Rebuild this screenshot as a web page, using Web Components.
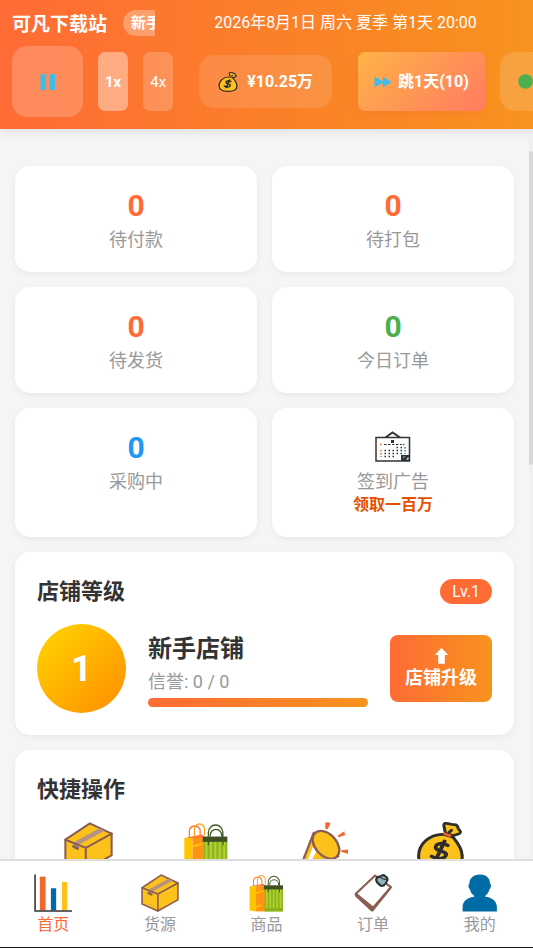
<!DOCTYPE html>
<html lang="zh-CN">
<head>
<meta charset="utf-8">
<meta name="viewport" content="width=device-width, initial-scale=1">
<title>可凡下载站</title>
<style>
  :root {
    --primary: #ff6b35;
    --accent: #f7931e;
    --muted: #999;
    --ink: #333;
  }
  html, body { height: 100%; }
  body {
    margin: 0;
    overflow: hidden;
    background: #f5f5f5;
    color: var(--ink);
    font-family: Roboto, "Noto Sans CJK SC", sans-serif;
  }
</style>
</head>
<body>
<shop-app></shop-app>

<script>
const ICONS = {
  box: `
    <g stroke="#8a5d50" stroke-width="3" stroke-linejoin="round" stroke-linecap="round">
      <path fill="#fcc21b" d="M38 2 70 17V49L32 70 2 57V26Z"/>
      <path fill="#b99182" stroke="none" d="M14 30 52 9l8 4-38 20v6l-8-4Z"/>
      <path fill="none" d="M2 26 32 38 70 17M32 38V70"/>
      <path stroke-width="4" d="M14 36 20 39"/>
      <path stroke="#d9a878" d="M16 57 19 58"/>
    </g>`,
  bags: `
    <g transform="translate(3 2) scale(.93 .97)">
      <path fill="none" stroke="#ff7a2f" stroke-width="2" d="M10 23V10a9 9 0 0 1 17 0V20"/>
      <path fill="none" stroke="#ffa01c" stroke-width="2" d="M18 20V9a8 8 0 0 1 16 0V18"/>
      <path fill="#ff7a2f" d="M2 22 30 17 36 22Z"/>
      <path fill="#ffc400" d="M2 22H15V71L2 69Z"/>
      <path fill="#ff9314" d="M15 22H35V71H15Z"/>
      <path stroke="#ffc400" stroke-width="3" d="M15 35 30 31M15 63 26 58"/>
      <path fill="#8fb61d" d="M33 27H70V71H33Z"/>
      <path stroke="#b2d235" stroke-width="3" d="M37 28V65M44 28V65M51 28V65M58 28V65M65 28V65"/>
      <path fill="#8cb119" d="M33 65H70V71H33Z"/>
      <path fill="#3f4f22" d="M31 20H70V28H31Z"/>
      <path fill="none" stroke="#3f5a25" stroke-width="2" d="M40 33V14a11 11 0 0 1 23 0V33M43 20V18a9 9 0 0 1 18 0v2"/>
    </g>`,
  horn: `
    <g transform="translate(-4 0) scale(1.12)">
      <path fill="#fcc21b" stroke="#8a5d50" stroke-width="3" stroke-linejoin="round" d="M23 14 7 55l6 7 42-17Z"/>
      <path fill="#fff" d="M24 27 12 57l4 1L29 34Z"/>
      <ellipse cx="39" cy="30" rx="21" ry="14" transform="rotate(48 39 30)" fill="#fcc21b" stroke="#8a5d50" stroke-width="3"/>
      <path fill="#f06a30" d="M38 1q4-2 7 1l-4 8-3-1ZM63 12l1 5-8 3-2-2ZM68 36v6l-9-3v-2Z"/>
    </g>`,
  money: `
    <g transform="translate(-5 0) scale(1.12 1.01)" stroke="#2d2d2d" stroke-width="4" stroke-linejoin="round" stroke-linecap="round">
      <path fill="#fcc21b" d="M41 18C22 17 7 33 8 51c1 13 13 18 30 18s28-5 27-20c0-9-6-19-12-27Z"/>
      <path fill="#fcc21b" d="M43 16 41 5q0-4 4-3l9 2q5-1 6 6 5 5 1 7l-8 3Z"/>
      <path fill="none" d="M48 15 51 12"/>
      <path stroke="#e8602c" d="M42 17 49 20"/>
      <path fill="none" stroke-width="5" d="M46 34q-8-5-14-1-5 6 4 9 12 3 6 9-7 5-17-1M42 28 30 56"/>
    </g>`,
  chart: `
    <path fill="#f1672e" d="M11 5H22V69H11Z"/>
    <path fill="#0069a6" d="M32 27H42V69H32Z"/>
    <path fill="#fcc21b" d="M53 15H63V69H53Z"/>
    <path fill="none" stroke="#333" stroke-width="3" d="M2 1V70H72"/>`,
  board: `
    <path fill="#fff" stroke="#8a5d50" stroke-width="4" stroke-linejoin="round" d="M40 3 70 25 35 68 3 38Z"/>
    <path fill="#8a5d50" d="M2 37 5 36 36 61 68 24 71 27 36 71H33L2 42Z"/>
    <path fill="#8fb4bd" stroke="#2d3133" stroke-width="4" stroke-linejoin="round" d="M42 10q3-6 8-5 4-5 9-1 6 3 4 8-1 5-7 10-5 2-9-3-5-3-5-9Z"/>
    <path fill="none" stroke="#2d3133" stroke-width="2" d="M49 6q6 5 13 4"/>`,
  person: `
    <path fill="#006ca5" d="M36 1c13 0 19 8 19 17 3 2 2 9-1 11-2 7-5 10-8 12v2c12 1 22 8 22 20v8H3V63c0-12 10-19 22-20v-2c-4-2-7-6-8-12-3-2-4-9-1-11C16 9 23 1 36 1Z"/>`,
  calendar: `
    <path fill="none" stroke="#333" stroke-width="4" d="M21 15 35 5 50 15"/>
    <path fill="#fff" stroke="#333" stroke-width="3" d="M2 15H69V62H2Z"/>
    <path stroke="#333" stroke-width="6" d="M32 23H38"/>
    <path fill="none" stroke="#333" stroke-width="2" stroke-dasharray="5 3" d="M18 29H54"/>
    <g fill="none" stroke="#333" stroke-width="3" stroke-dasharray="3 5">
      <path d="M43 35H54M19 41H54M19 47H54M19 53H38"/>
    </g>
    <path fill="none" stroke="#f1672e" stroke-width="3" stroke-dasharray="3 3" d="M10 29H16M12 40V54"/>
    <path fill="none" stroke="#1c7fb5" stroke-width="3" stroke-dasharray="3 3" d="M56 29H62M60 34V48"/>
    <path fill="#2d3133" d="M52 50H70V62H52Z"/>
    <path fill="#6ab7dd" d="M56 53h5l-4 4Z"/>
    <path fill="#fff" d="M62 59 67 54v5Z"/>`,
  pause: `<path fill="#3fbde8" d="M21 20H31V52H21ZM40 20H50V52H40Z"/>`,
  forward: `<path fill="#3fbde8" d="M2 14 35 33V14L70 36 35 58V39L2 58Z"/>`,
  up: `<path fill="#fff" d="M36 3 64 34H50V71H22V34H8Z"/>`,
  dot: `<circle cx="36" cy="36" r="35" fill="#4caf50"/>`
};

class AppIcon extends HTMLElement {
  constructor() {
    super();
    this._root = this.attachShadow({mode: 'open'});
  }

  connectedCallback() {
    this._root.innerHTML = `
      <style>
        :host { display: block; flex: none; width: var(--icon-size, 36px); height: var(--icon-size, 36px); }
        svg { display: block; width: 100%; height: 100%; }
      </style>
      <svg viewBox="0 0 72 72" aria-hidden="true">${ICONS[this.getAttribute('name')]}</svg>
    `;
  }
}

class AppHeader extends HTMLElement {
  constructor() {
    super();
    this._root = this.attachShadow({mode: 'open'});
    this._root.innerHTML = `
      <style>
        :host {
          display: flex;
          flex-direction: column;
          flex: none;
          gap: 10px;
          padding: 10px 12px 12px;
          overflow: hidden;
          background: linear-gradient(90deg, var(--primary), var(--accent));
          color: #fff;
        }
        .top, .brand, .tools, .chip, button { display: flex; align-items: center; }
        .top { gap: 15px; }
        .brand { flex: none; width: 143px; overflow: hidden; gap: 16px; white-space: nowrap; }
        h1 { margin: 0; font-size: 19px; line-height: 26px; padding-top: 2px; margin-bottom: -2px; }
        .rank {
          flex: none;
          padding: 0 8px;
          border-radius: 13px;
          background: rgba(255, 255, 255, .3);
          font-size: 15px;
          font-weight: bold;
          line-height: 26px;
        }
        time { flex: 1; text-align: center; font-size: 16px; line-height: 24px; white-space: nowrap; }
        .tools { gap: 15px; }
        button, .chip {
          flex: none;
          box-sizing: border-box;
          justify-content: center;
          border: 0;
          color: inherit;
          font: bold 16px/22px Roboto, "Noto Sans CJK SC", sans-serif;
          white-space: nowrap;
        }
        .pause { width: 71px; height: 71px; border-radius: 15px; background: rgba(255, 255, 255, .2); --icon-size: 36px; }
        .speed { height: 59px; padding: 0 7px; border-radius: 7px; background: rgba(255, 255, 255, .2); font-size: 15px; font-weight: normal; }
        .speed.on { background: rgba(255, 255, 255, .4); font-weight: bold; }
        .chip { height: 53px; margin: 0 11px; padding: 0 19px; gap: 9px; border-radius: 15px; background: rgba(255, 255, 255, .12); --icon-size: 20px; }
        .skip {
          height: 59px;
          padding: 0 16px;
          gap: 6px;
          border-radius: 7px;
          background: linear-gradient(135deg, #ffb347, #ff7b61);
          box-shadow: 0 3px 8px rgba(255, 107, 53, .3);
          --icon-size: 18px;
        }
        .status { height: 59px; padding: 0 18px; border-radius: 15px; background: rgba(255, 255, 255, .15); --icon-size: 15px; }
      </style>
      <div class="top">
        <div class="brand"><h1>可凡下载站</h1><span class="rank">新手</span></div>
        <time datetime="2026-08-01T20:00">2026年8月1日 周六 夏季 第1天 20:00</time>
      </div>
      <div class="tools">
        <button class="pause" aria-label="暂停"><app-icon name="pause"></app-icon></button>
        <button class="speed on">1x</button>
        <button class="speed">4x</button>
        <div class="chip"><app-icon name="money"></app-icon><span>¥10.25万</span></div>
        <button class="skip"><app-icon name="forward"></app-icon><span>跳1天(10)</span></button>
        <button class="status" aria-label="状态"><app-icon name="dot"></app-icon></button>
      </div>
    `;
  }
}

class StatCard extends HTMLElement {
  constructor() {
    super();
    this._root = this.attachShadow({mode: 'open'});
    this._root.innerHTML = `
      <style>
        :host {
          display: flex;
          flex-direction: column;
          align-items: center;
          padding: 22px 22px 21px;
          border-radius: 15px;
          background: #fff;
          box-shadow: 0 2px 6px rgba(0, 0, 0, .05);
          color: var(--muted);
          font-size: 18px;
          line-height: 23px;
        }
        .value {
          display: flex;
          align-items: center;
          height: 35px;
          margin-bottom: 5px;
          color: var(--value-color, var(--primary));
          font-size: 30px;
          font-weight: bold;
        }
        ::slotted([slot="note"]) { color: #e65100; font-size: 16px; }
      </style>
      <div class="value"><slot name="value">0</slot></div>
      <slot></slot>
      <slot name="note"></slot>
    `;
  }
}

class PanelCard extends HTMLElement {
  constructor() {
    super();
    this._root = this.attachShadow({mode: 'open'});
    this._root.innerHTML = `
      <style>
        :host {
          display: block;
          padding: 22px;
          border-radius: 15px;
          background: #fff;
          box-shadow: 0 2px 6px rgba(0, 0, 0, .05);
        }
        header { display: flex; align-items: center; justify-content: space-between; margin-bottom: 15px; }
        h2 { margin: 0; font-size: 22px; line-height: 35px; }
        ::slotted([slot="badge"]) {
          padding: 0 12px;
          border-radius: 13px;
          background: var(--primary);
          color: #fff;
          font-size: 16px;
          line-height: 25px;
        }
      </style>
      <header><h2><slot name="title"></slot></h2><slot name="badge"></slot></header>
      <slot></slot>
    `;
  }
}

class ShopLevel extends HTMLElement {
  constructor() {
    super();
    this._root = this.attachShadow({mode: 'open'});
    this._root.innerHTML = `
      <style>
        :host { display: flex; align-items: center; gap: 22px; }
        .medal {
          flex: none;
          display: flex;
          align-items: center;
          justify-content: center;
          width: 89px;
          height: 89px;
          border-radius: 50%;
          background: linear-gradient(135deg, #ffd700, #ff8c00);
          color: #fff;
          font-size: 36px;
          font-weight: bold;
        }
        .info { flex: 1; min-width: 0; }
        h3 { margin: 0; font-size: 24px; line-height: 38px; }
        p { margin: 0 0 3px; color: var(--muted); font-size: 18px; line-height: 27px; }
        .bar { height: 9px; border-radius: 5px; background: linear-gradient(90deg, var(--primary), var(--accent)); }
        button {
          flex: none;
          display: flex;
          flex-direction: column;
          align-items: center;
          gap: 2px;
          padding: 12px 15px;
          border: 0;
          border-radius: 8px;
          background: linear-gradient(90deg, var(--primary), var(--accent));
          color: #fff;
          font: bold 18px/24px Roboto, "Noto Sans CJK SC", sans-serif;
          --icon-size: 17px;
        }
      </style>
      <div class="medal">1</div>
      <div class="info">
        <h3>新手店铺</h3>
        <p>信誉: 0 / 0</p>
        <div class="bar"></div>
      </div>
      <button><app-icon name="up"></app-icon><span>店铺升级</span></button>
    `;
  }
}

class QuickActions extends HTMLElement {
  constructor() {
    super();
    this._root = this.attachShadow({mode: 'open'});
    this._root.innerHTML = `
      <style>
        :host { display: grid; grid-template-columns: repeat(4, 1fr); gap: 15px; --icon-size: 49px; }
        button { display: flex; justify-content: center; padding: 0; border: 0; background: none; }
      </style>
      <button aria-label="货源"><app-icon name="box"></app-icon></button>
      <button aria-label="商品"><app-icon name="bags"></app-icon></button>
      <button aria-label="推广"><app-icon name="horn"></app-icon></button>
      <button aria-label="资金"><app-icon name="money"></app-icon></button>
    `;
  }
}

class NavItem extends HTMLElement {
  constructor() {
    super();
    this._root = this.attachShadow({mode: 'open'});
  }

  connectedCallback() {
    this._root.innerHTML = `
      <style>
        :host { display: block; flex: 1; --icon-size: 38px; }
        a {
          display: flex;
          flex-direction: column;
          align-items: center;
          gap: 1px;
          color: var(--muted);
          font-size: 16px;
          line-height: 24px;
          text-decoration: none;
        }
        :host([active]) a { color: var(--primary); }
      </style>
      <a href="#${this.getAttribute('icon')}"><app-icon name="${this.getAttribute('icon')}"></app-icon><slot></slot></a>
    `;
  }
}

class ShopApp extends HTMLElement {
  constructor() {
    super();
    this._root = this.attachShadow({mode: 'open'});
    this._root.innerHTML = `
      <style>
        :host { display: flex; flex-direction: column; height: 100vh; }
        app-header { position: relative; z-index: 1; box-shadow: 0 2px 10px rgba(0, 0, 0, .1); }
        .view { flex: 1; min-height: 0; display: flex; overflow: hidden; }
        main { flex: 1; min-width: 0; padding: 37px 15px 15px; }
        .stats { display: grid; grid-template-columns: 1fr 1fr; gap: 15px; }
        panel-card { margin-top: 15px; }
        .green { --value-color: #4caf50; }
        .blue { --value-color: #2196f3; }
        .track { flex: none; width: 4px; padding-top: 22px; background: #f1f1f1; }
        .thumb { height: 314px; border-radius: 2px; background: #d9d9d9; }
        nav {
          flex: none;
          display: flex;
          padding: 13px 0 10px;
          border-top: 2px solid #ddd;
          border-bottom: 1px solid #111;
          background: #fff;
        }
      </style>
      <app-header></app-header>
      <div class="view">
        <main>
          <div class="stats">
            <stat-card>待付款</stat-card>
            <stat-card>待打包</stat-card>
            <stat-card>待发货</stat-card>
            <stat-card class="green">今日订单</stat-card>
            <stat-card class="blue">采购中</stat-card>
            <stat-card><app-icon slot="value" name="calendar"></app-icon>签到广告<strong slot="note">领取一百万</strong></stat-card>
          </div>
          <panel-card>
            <span slot="title">店铺等级</span>
            <span slot="badge">Lv.1</span>
            <shop-level></shop-level>
          </panel-card>
          <panel-card>
            <span slot="title">快捷操作</span>
            <quick-actions></quick-actions>
          </panel-card>
        </main>
        <div class="track"><div class="thumb"></div></div>
      </div>
      <nav>
        <nav-item icon="chart" active>首页</nav-item>
        <nav-item icon="box">货源</nav-item>
        <nav-item icon="bags">商品</nav-item>
        <nav-item icon="board">订单</nav-item>
        <nav-item icon="person">我的</nav-item>
      </nav>
    `;
  }
}

customElements.define('app-icon', AppIcon);
customElements.define('app-header', AppHeader);
customElements.define('stat-card', StatCard);
customElements.define('panel-card', PanelCard);
customElements.define('shop-level', ShopLevel);
customElements.define('quick-actions', QuickActions);
customElements.define('nav-item', NavItem);
customElements.define('shop-app', ShopApp);
</script>
</body>
</html>
